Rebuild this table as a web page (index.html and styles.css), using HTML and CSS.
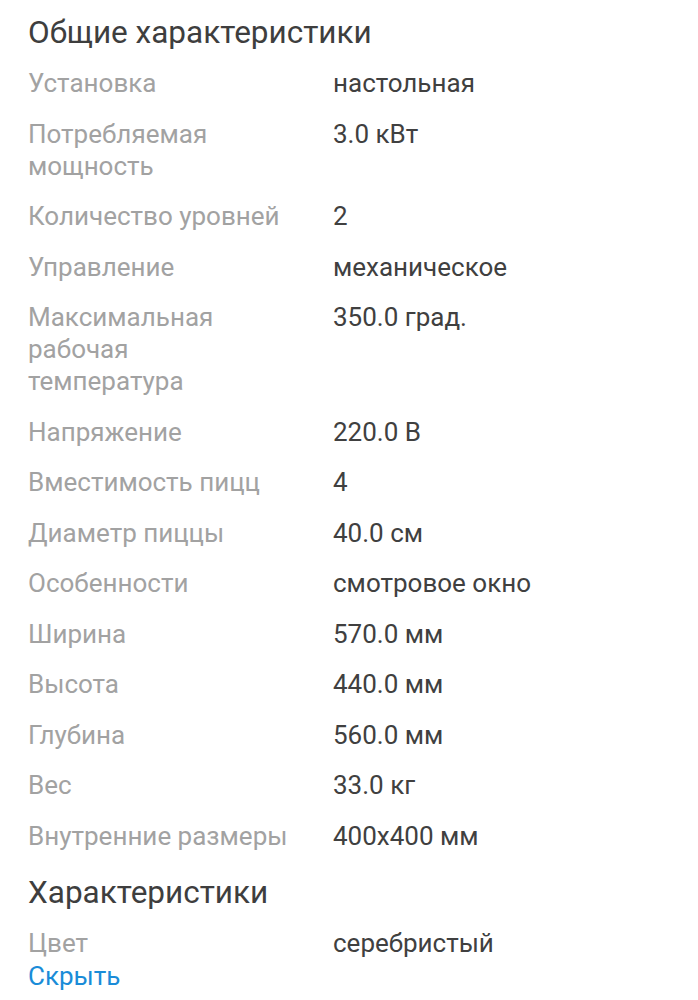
FILE: index.html
```html
<!DOCTYPE html>
<html lang="ru">
<head>
<meta charset="utf-8">
<link rel="stylesheet" href="styles.css">
</head>
<body>
<div class="page">
  <h2 class="title">Общие характеристики</h2>
  <dl class="specs">
    <dt>Установка</dt><dd>настольная</dd>
    <dt>Потребляемая мощность</dt><dd>3.0 кВт</dd>
    <dt>Количество уровней</dt><dd>2</dd>
    <dt>Управление</dt><dd>механическое</dd>
    <dt>Максимальная рабочая температура</dt><dd>350.0 град.</dd>
    <dt>Напряжение</dt><dd>220.0 В</dd>
    <dt>Вместимость пицц</dt><dd>4</dd>
    <dt>Диаметр пиццы</dt><dd>40.0 см</dd>
    <dt>Особенности</dt><dd>смотровое окно</dd>
    <dt>Ширина</dt><dd>570.0 мм</dd>
    <dt>Высота</dt><dd>440.0 мм</dd>
    <dt>Глубина</dt><dd>560.0 мм</dd>
    <dt>Вес</dt><dd>33.0 кг</dd>
    <dt>Внутренние размеры</dt><dd>400x400 мм</dd>
  </dl>
  <h2 class="title title-second">Характеристики</h2>
  <dl class="specs">
    <dt>Цвет</dt><dd>серебристый</dd>
  </dl>
  <a class="toggle" href="#">Скрыть</a>
</div>
</body>
</html>
```
FILE: styles.css
```css
html, body {
  margin: 0;
  padding: 0;
  background: #ffffff;
}
body {
  font-family: Roboto, "Noto Sans", "Liberation Sans", sans-serif;
}
.page {
  padding: 13px 20px 0 28px;
}
.title {
  margin: 0;
  font-size: 31.5px;
  font-weight: 400;
  line-height: 40px;
  color: #3e3e3e;
}
.title-second {
  margin-top: 21px;
}
.specs {
  display: grid;
  grid-template-columns: 305px 1fr;
  row-gap: 18.5px;
  margin: 14px 0 0 0;
  font-size: 26px;
  line-height: 32px;
}
.specs dt {
  color: #a2a2a2;
  margin: 0;
  max-width: 260px;
}
.specs dd {
  color: #404040;
  margin: 0;
}
.toggle {
  display: block;
  font-size: 26px;
  line-height: 32px;
  color: #1a8cd8;
  text-decoration: none;
  margin-top: 1px;
}
```
